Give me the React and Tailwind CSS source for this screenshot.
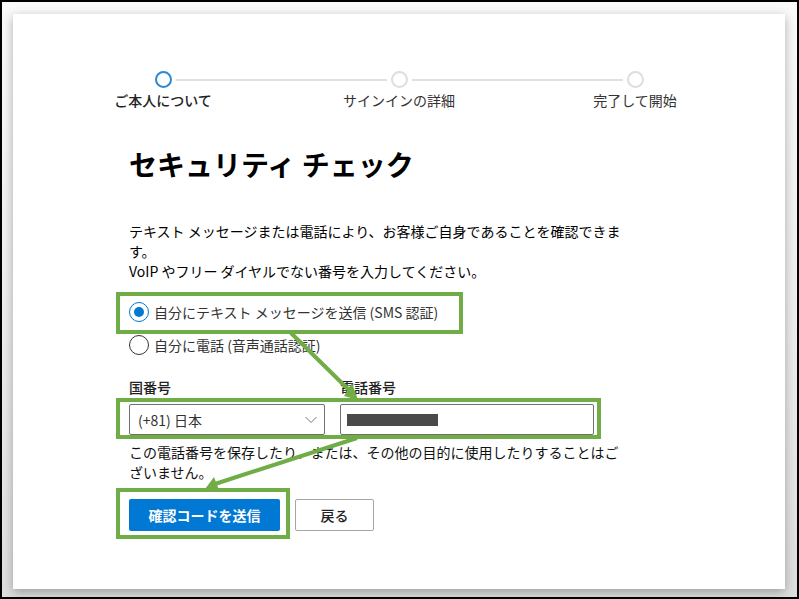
import { useState } from "react";

const STEPS = [
  { label: "ご本人について", active: true },
  { label: "サインインの詳細", active: false },
  { label: "完了して開始", active: false },
];

const METHODS = [
  { id: "sms", label: "自分にテキスト メッセージを送信 (SMS 認証)" },
  { id: "voice", label: "自分に電話 (音声通話認証)" },
];

function Stepper() {
  return (
    <ol className="grid grid-cols-3 pl-8 pr-8">
      {STEPS.map((step, i) => (
        <li key={step.label} className="flex flex-col items-center">
          <div className="flex w-full items-center gap-1">
            <span className={i === 0 ? "h-0.5 flex-1" : "h-0.5 flex-1 bg-[#e0e0e0]"} />
            <span
              className={
                step.active
                  ? "size-[17px] rounded-full border-2 border-[#2b88d8]"
                  : "size-[17px] rounded-full border-2 border-[#dedede]"
              }
            />
            <span
              className={i === STEPS.length - 1 ? "h-0.5 flex-1" : "h-0.5 flex-1 bg-[#e0e0e0]"}
            />
          </div>
          <span
            className={
              step.active
                ? "mt-0.5 text-sm leading-5 font-medium text-[#222]"
                : "mt-0.5 text-sm leading-5 text-[#333]"
            }
          >
            {step.label}
          </span>
        </li>
      ))}
    </ol>
  );
}

/* Tutorial marks drawn over the form: three frames joined by arrows. */
function Annotations() {
  return (
    <svg
      className="pointer-events-none absolute top-0 left-0 h-[560px] w-[640px]"
      viewBox="0 0 640 560"
      fill="none"
      stroke="#70ad47"
      strokeWidth="4"
      aria-hidden="true"
    >
      <rect x="105" y="280" width="343" height="38" />
      <rect x="105" y="386" width="481" height="37" />
      <rect x="105" y="476" width="170" height="47" />
      <path d="M278 319L338 378M344 424L202 470" />
      <path d="M345 386L331 382L339 369ZM192 475L201 463L206 476Z" fill="#70ad47" stroke="none" />
    </svg>
  );
}

export default function App() {
  const [method, setMethod] = useState("sms");

  return (
    <div className="flex min-h-screen flex-col border-2 border-black bg-gradient-to-b from-[#fafafa] via-[#eeeeee] to-[#dedede] pt-3 pr-3 pb-2 pl-[11px] font-['Noto_Sans_CJK_JP','Open_Sans',sans-serif] text-black">
      <main className="relative flex-1 bg-white pt-[57px] pb-14 shadow-[0_3px_10px_rgba(0,0,0,0.3)]">
        <Stepper />

        <form className="max-w-[640px] pl-[116px]" onSubmit={(e) => e.preventDefault()}>
          <h1 className="mt-9 text-[28px] leading-9 font-bold">セキュリティ チェック</h1>

          <p className="mt-[39px] text-sm leading-5 whitespace-nowrap">
            テキスト メッセージまたは電話により、お客様ご自身であることを確認できま
            <br />
            す。
            <br />
            VoIP やフリー ダイヤルでない番号を入力してください。
          </p>

          <fieldset className="mt-[21px] flex flex-col gap-[13px]">
            {METHODS.map((m) => (
              <label
                key={m.id}
                className="flex items-center gap-[5px] text-sm leading-5 whitespace-nowrap text-[#333]"
              >
                <input
                  type="radio"
                  name="method"
                  value={m.id}
                  checked={method === m.id}
                  onChange={() => setMethod(m.id)}
                  className="grid size-5 shrink-0 appearance-none place-items-center rounded-full border border-[#333] bg-white before:size-2.5 before:rounded-full checked:border-[#0078d4] checked:before:bg-[#0078d4]"
                />
                {m.label}
              </label>
            ))}
          </fieldset>

          <div className="mt-[22px] flex gap-[15px]">
            <div className="w-[196px]">
              <label htmlFor="country" className="block text-sm leading-5 font-medium text-[#222]">
                国番号
              </label>
              <div className="relative mt-[7px]">
                <select
                  id="country"
                  className="block h-[31px] w-full appearance-none rounded-xs border border-[#707070] bg-white px-2 text-sm text-[#333]"
                >
                  <option>(+81) 日本</option>
                </select>
                <svg
                  className="pointer-events-none absolute top-3 right-2 h-2 w-3"
                  viewBox="0 0 12 8"
                  fill="none"
                  stroke="#777"
                  aria-hidden="true"
                >
                  <path d="M0.5 1L6 6.5L11.5 1" />
                </svg>
              </div>
            </div>
            <div className="w-[254px]">
              <label htmlFor="phone" className="block text-sm leading-5 font-medium text-[#222]">
                電話番号
              </label>
              <div className="relative mt-[7px]">
                <input
                  id="phone"
                  type="tel"
                  className="block h-[31px] w-full rounded-xs border border-[#707070] bg-white px-2 text-sm"
                />
                <span className="absolute top-2.5 left-[7px] h-3 w-[91px] bg-[#4a4a4a]" />
              </div>
            </div>
          </div>

          <p className="mt-[7px] text-sm leading-5 whitespace-nowrap text-[#111]">
            この電話番号を保存したり、または、その他の目的に使用したりすることはご
            <br />
            ざいません。
          </p>

          <div className="mt-[17px] flex gap-[15px]">
            <button
              type="submit"
              className="h-8 w-[151px] rounded-xs bg-[#0078d4] text-sm font-bold text-white"
            >
              確認コードを送信
            </button>
            <button
              type="button"
              className="h-8 w-[79px] rounded-xs border border-[#a6a6a6] bg-white text-sm font-medium text-[#222]"
            >
              戻る
            </button>
          </div>
        </form>

        <Annotations />
      </main>
    </div>
  );
}
